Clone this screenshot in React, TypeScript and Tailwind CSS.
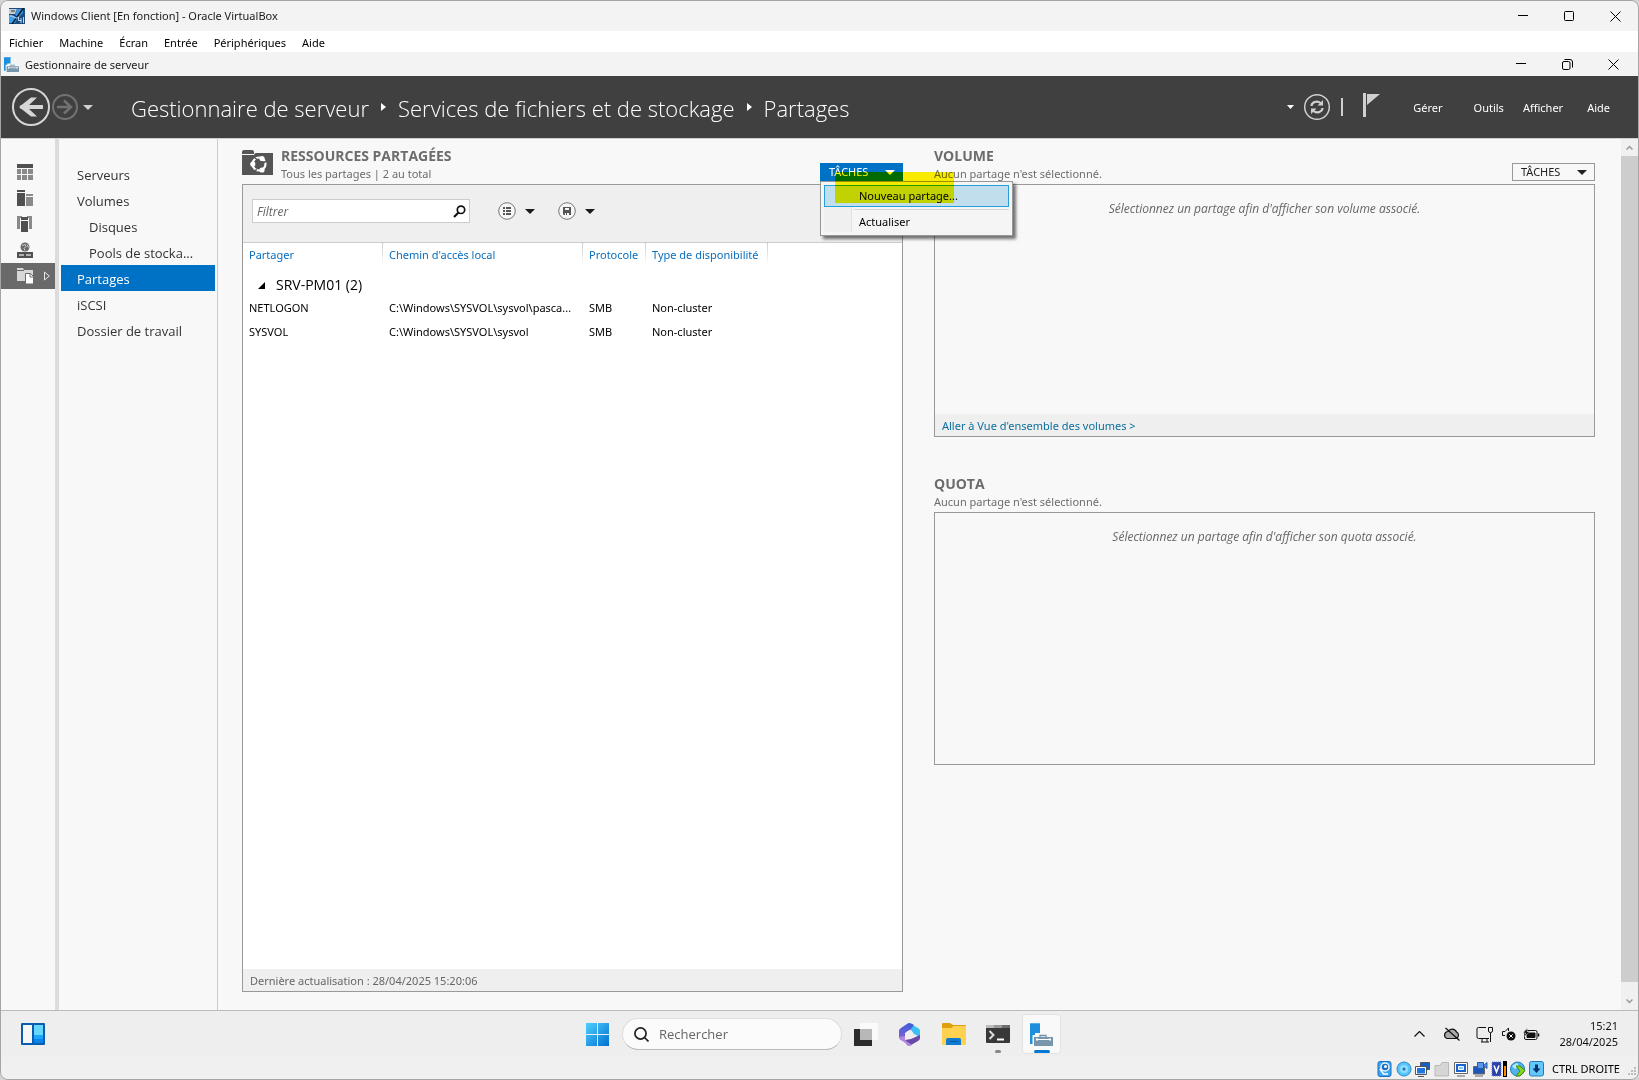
import { useState } from 'react'

const menus = ['Fichier', 'Machine', 'Écran', 'Entrée', 'Périphériques', 'Aide']

const navItems = [
  { label: 'Serveurs' },
  { label: 'Volumes' },
  { label: 'Disques', nested: true },
  { label: 'Pools de stocka...', nested: true },
  { label: 'Partages' },
  { label: 'iSCSI' },
  { label: 'Dossier de travail' }
]

const shares = [
  { name: 'NETLOGON', path: 'C:\\Windows\\SYSVOL\\sysvol\\pasca...', protocol: 'SMB', availability: 'Non-cluster' },
  { name: 'SYSVOL', path: 'C:\\Windows\\SYSVOL\\sysvol', protocol: 'SMB', availability: 'Non-cluster' }
]

function WindowButtons({ restored }: { restored?: boolean }) {
  return (
    <div className="ml-auto flex h-full">
      <button aria-label="Réduire" className="flex w-[46px] items-center justify-center">
        <svg width="10" height="10" stroke="#000" fill="none"><path d="M0 4.5h10" /></svg>
      </button>
      <button aria-label="Agrandir" className="flex w-[46px] items-center justify-center">
        {restored ? (
          <svg width="11" height="11" stroke="#000" fill="none">
            <rect x="0.5" y="2.5" width="7.5" height="8" rx="1.5" />
            <path d="M2.5 0.5h5.500a2.500 2.500 0 0 1 2.500 2.500v5.500" />
          </svg>
        ) : (
          <svg width="10" height="10" stroke="#000" fill="none"><rect x="0.5" y="0.5" width="9" height="9" rx="1" /></svg>
        )}
      </button>
      <button aria-label="Fermer" className="flex w-[46px] items-center justify-center">
        <svg width="11" height="11" stroke="#000" fill="none"><path d="M0.5 0.5l10 10M10.5 0.5l-10 10" /></svg>
      </button>
    </div>
  )
}

function Caret({ className }: { className?: string }) {
  return (
    <svg width="10" height="5" viewBox="0 0 10 5" fill="currentColor" className={className}><path d="M0 0h10L5 5z" /></svg>
  )
}

function ServerIcon({ className }: { className: string }) {
  return (
    <svg viewBox="0 0 23 23" className={className}>
      <path d="M0 0h10v10H5v11H0z" fill="#1e8fdc" />
      <path d="M0 0h10v1H0z" fill="#55b0ea" />
      <path d="M2.500 12h20.500v11H2.500z" fill="#f8f8f8" />
      <path d="M10 14v-1.500h6V14" fill="none" stroke="#6f93ad" strokeWidth="1.300" />
      <path d="M4 14h19v9H4z" fill="#7796ab" />
      <path d="M6 16.500h15" stroke="#fff" />
      <path d="M7 15.300v2.400M20 15.300v2.400" stroke="#fff" strokeWidth="1.400" />
    </svg>
  )
}

function TasksButton({ active, onClick }: { active?: boolean; onClick?: () => void }) {
  return (
    <button
      onClick={onClick}
      className={`flex h-[18px] w-[83px] items-center justify-between border pr-[7px] pl-2 text-[11px] leading-4 ${active ? 'border-[#0072c6] bg-[#0072c6] text-white' : 'border-[#999] bg-[#f8f8f8] text-[#222]'}`}
    >
      TÂCHES
      <Caret />
    </button>
  )
}

function SectionTitle({ title, subtitle }: { title: string; subtitle: string }) {
  return (
    <div className="whitespace-nowrap text-[#6c6c6c]">
      <h2 className="font-['Open_Sans',sans-serif] text-[14px] leading-[18px] font-bold">{title}</h2>
      <p className="text-[11px] leading-[18px]">{subtitle}</p>
    </div>
  )
}

function ToolIcons() {
  return (
    <div className="w-[54px] shrink-0 pt-5">
      <button aria-label="Tableau de bord" className="flex h-[26px] w-full items-center pl-4">
        <svg width="16" height="16">
          <path d="M0 0h16v4H0z" fill="#505050" />
          <path d="M0 5h4v5H0zM0 11h4v5H0zM5 5h5v5H5zM5 11h5v5H5zM11 5h5v5h-5zM11 11h5v5h-5z" fill="#8a8a8a" />
        </svg>
      </button>
      <button aria-label="Serveur local" className="flex h-[26px] w-full items-center pl-4">
        <svg width="16" height="16">
          <path d="M0 0h8v2H0zM0 3h8v13H0z" fill="#505050" />
          <path d="M9 4h7v2H9zM9 7h7v9H9z" fill="#8a8a8a" />
        </svg>
      </button>
      <button aria-label="Tous les serveurs" className="flex h-[26px] w-full items-center pl-4">
        <svg width="16" height="16">
          <path d="M0 0h5v2H3v11H0zM10 0h5v13h-3V2h-2z" fill="#8a8a8a" />
          <path d="M4 1h7v3H4zM4 5h7v11H4z" fill="#505050" />
        </svg>
      </button>
      <button aria-label="AD DS" className="flex h-[26px] w-full items-center pl-4">
        <svg width="16" height="16">
          <circle cx="8" cy="5" r="4.500" fill="#6a6a6a" />
          <path d="M5 3.500l3-1 1 2-2 2 1 2M10 2.500l1.500 3" stroke="#cfcfcf" fill="none" />
          <path d="M0 10h16v6H0z" fill="#505050" />
          <path d="M2 13h5M9 13h5" stroke="#d0d0d0" strokeWidth="1.500" />
        </svg>
      </button>
      <button aria-label="Services de fichiers" className="flex h-[26px] w-full items-center justify-between bg-[#6a6a6a] pr-[5px] pl-4">
        <svg width="17" height="16">
          <path d="M0 0h6l1 2h9v11H0z" fill="#d8d8d8" />
          <path d="M0 2.500h7" stroke="#6a6a6a" />
          <path d="M8.500 5.500h5l3 3v7.500h-8z" fill="#fff" stroke="#6a6a6a" />
          <path d="M13 5.500v3.500h3.500" fill="none" stroke="#6a6a6a" />
        </svg>
        <svg width="6" height="10" fill="none" stroke="#e4e4e4"><path d="M0.500 1v8L5.300 5z" /></svg>
      </button>
    </div>
  )
}

function TitleBars() {
  return (
    <>
      <div className="flex h-[30px] items-center bg-[#f3f3f3] pl-2">
        <svg width="16" height="16" className="mr-[6px]">
          <rect width="16" height="16" fill="#1c4a7c" />
          <path d="M0 1h8l-2 5H0z" fill="#c3ccd2" />
          <path d="M2 3h4" stroke="#333" />
          <path d="M8 1h6v4L9 10 6 6z" fill="#3f93d8" />
          <path d="M0 7l5 1 3 3-2 4H0z" fill="#3aa0f0" />
          <path d="M14.500 0L3 16" stroke="#0a1a2c" strokeWidth="1.500" />
          <path d="M1 8c4-1 5 4 9 1" stroke="#e7f4fd" fill="none" />
          <path d="M9.500 9v3.500h3M12 10v5M14.500 9v6" stroke="#b5dcf8" fill="none" />
        </svg>
        <h1 className="text-[11px]">Windows Client [En fonction] - Oracle VirtualBox</h1>
        <WindowButtons />
      </div>
      <nav className="flex h-[21px] items-center gap-4 bg-white pt-[3px] pl-2 text-[11px] text-black">
        {menus.map((menu) => (
          <button key={menu}>{menu}</button>
        ))}
      </nav>
      <div className="flex h-6 items-center bg-[#f3f3f3] pr-[2px] pl-[3px]">
        <ServerIcon className="mr-[6px] h-[15px] w-[15px]" />
        <span className="pt-[2px] text-[11px]">Gestionnaire de serveur</span>
        <WindowButtons restored />
      </div>
    </>
  )
}

function Header() {
  return (
    <header className="flex h-[63px] items-center border-b border-[#cfcfcf] bg-[#404040] text-white">
      <div className="flex w-[130px] shrink-0 items-center pl-[10px]">
        <button aria-label="Précédent">
          <svg width="40" height="40" fill="none" stroke="#d6d6d6">
            <circle cx="20" cy="20" r="18" strokeWidth="2" />
            <path d="M9.500 20H32" strokeWidth="4" />
            <path d="M20 10.500h6L16 20l10 9.500h-6L8 20z" fill="#d6d6d6" stroke="none" />
          </svg>
        </button>
        <button aria-label="Suivant">
          <svg width="28" height="28" fill="none" stroke="#727272">
            <circle cx="14" cy="14" r="12" strokeWidth="2" />
            <path d="M6 14h14" strokeWidth="2.500" />
            <path d="M13 7.500l7 6.500-7 6.500" strokeWidth="2.500" />
          </svg>
        </button>
        <button aria-label="Historique" className="ml-1 text-[#d0d0d0]"><Caret /></button>
      </div>
      <div className="flex items-center pt-[2px] font-['Open_Sans',sans-serif] text-[22px] font-light whitespace-nowrap">
        Gestionnaire de serveur
        <svg width="29" height="12" fill="#fff"><path d="M12 1l5 4-5 4z" /></svg>
        Services de fichiers et de stockage
        <svg width="29" height="12" fill="#fff"><path d="M12 1l5 4-5 4z" /></svg>
        Partages
      </div>
      <div className="ml-auto flex items-center pr-7 text-[11px]">
        <svg width="7" height="4" fill="#fff" className="mr-[9px]"><path d="M0 0h7L3.500 4z" /></svg>
        <button aria-label="Actualiser">
          <svg width="28" height="28" fill="none" stroke="#cfcfcf">
            <circle cx="14" cy="14" r="12.300" strokeWidth="1.500" />
            <path d="M8.500 13c0-3.500 5.500-6 9-3M19.500 15c0 3.500-5.500 6-9 3" strokeWidth="2.200" />
            <path d="M20 7v5.500h-5.500zM8 21v-5.500h5.500z" fill="#cfcfcf" stroke="none" />
          </svg>
        </button>
        <div className="mr-5 ml-[10px] h-[18px] w-[2px] bg-[#cfcfcf]" />
        <button aria-label="Notifications" className="mr-8">
          <svg width="18" height="28" fill="#d0d0d0"><path d="M0 0h3v24H0zM4 1h13L4 12z" /></svg>
        </button>
        <button className="mr-[31px] pt-[2px]">Gérer</button>
        <button className="mr-[19px] pt-[2px]">Outils</button>
        <button className="mr-6 pt-[2px]">Afficher</button>
        <button className="pt-[2px]">Aide</button>
      </div>
    </header>
  )
}

function SharesPanel() {
  const [open, setOpen] = useState(true)

  return (
    <section className="flex flex-col">
      <div className="flex h-[45px] justify-between pt-2">
        <div className="flex">
          <svg width="31" height="28" className="mr-2">
            <path d="M0 5q0-2 2-2h8q2 0 2 2v1h19v22H0z" fill="#555" />
            <path d="M0 7.500h12l1-1.500" stroke="#f8f8f8" fill="none" />
            <circle cx="17" cy="17" r="6.500" fill="none" stroke="#fff" strokeWidth="2.200" />
            <path d="M12.500 10.500l3 2.500M24.500 14l-3.500 2M13 25l1.500-3" stroke="#555" strokeWidth="1.500" />
            <circle cx="20" cy="11.500" r="2.600" fill="#fff" />
            <circle cx="10.800" cy="17" r="2.600" fill="#fff" />
            <circle cx="20" cy="23" r="2.600" fill="#fff" />
          </svg>
          <SectionTitle title="RESSOURCES PARTAGÉES" subtitle="Tous les partages | 2 au total" />
        </div>
        <div className="relative mt-4 h-[18px]">
          <TasksButton active onClick={() => setOpen(!open)} />
          {open && (
            <div className="absolute top-[18px] left-0 z-10 flex w-[193px] flex-col border border-[#979797] bg-[#f5f5f5] p-[3px] text-[11px] text-black shadow-[3px_3px_3px_rgba(0,0,0,0.55)]">
              <button className="h-[22px] border border-[#26a0da] bg-[#c1deed] pl-[34px] text-left">Nouveau partage...</button>
              <div className="flex">
                <div className="w-7 border-r border-[#e0e0e0] bg-[#f0f0f0]" />
                <div className="flex-1">
                  <div className="my-[2px] ml-[2px] h-px bg-[#d5d5d5]" />
                  <button className="h-5 w-full pl-[7px] text-left leading-5">Actualiser</button>
                </div>
              </div>
            </div>
          )}
          {/* highlighter stroke */}
          <div className="pointer-events-none absolute top-[9px] left-[15px] z-20 h-[31px] w-[119px] bg-[#fff200] mix-blend-multiply" />
        </div>
      </div>
      <div className="flex flex-1 flex-col border border-[#999] bg-white">
        <div className="flex h-[58px] items-start border-b border-[#ccc] bg-[#efefef] pt-[14px] pl-[9px]">
          <label className="flex h-6 w-[218px] items-center border border-[#ccc] bg-white pr-[3px] pl-1">
            <input
              aria-label="Filtrer"
              placeholder="Filtrer"
              className="min-w-0 flex-1 pt-px font-['Open_Sans',sans-serif] text-[12px] italic outline-none placeholder:text-[#666]"
            />
            <svg width="13" height="13" fill="none" stroke="#111">
              <circle cx="8" cy="4.800" r="3.700" strokeWidth="1.700" />
              <path d="M5.500 7.500L1 12" strokeWidth="2.200" />
            </svg>
          </label>
          <button aria-label="Regrouper" className="ml-7 flex h-6 items-center">
            <svg width="18" height="18">
              <circle cx="9" cy="9" r="8.300" fill="#f6f6f6" stroke="#777" />
              <path d="M5 5h2v2H5zM8 5h5v2H8zM5 8h2v2H5zM8 8h5v2H8zM5 11h2v2H5zM8 11h5v2H8z" fill="#555" />
            </svg>
            <Caret className="ml-[9px]" />
          </button>
          <button aria-label="Enregistrer la requête" className="ml-[23px] flex h-6 items-center">
            <svg width="18" height="18">
              <circle cx="9" cy="9" r="8.300" fill="#f6f6f6" stroke="#777" />
              <path d="M5 5h8v8H6l-1-1z" fill="#555" />
              <path d="M7 6h4v2H7zM7 11h1v2H7zM9 11h2v2H9z" fill="#f6f6f6" />
            </svg>
            <Caret className="ml-[9px]" />
          </button>
        </div>
        <table className="w-full table-fixed text-left text-[11px] text-black">
          <thead>
            <tr className="h-6 text-[#0a6ebd]">
              {[
                { label: 'Partager', width: 'w-[140px]' },
                { label: "Chemin d'accès local", width: 'w-[200px]' },
                { label: 'Protocole', width: 'w-[63px]' },
                { label: 'Type de disponibilité', width: 'w-[122px]' }
              ].map((col) => (
                <th
                  key={col.label}
                  className={`${col.width} bg-linear-to-b from-[#ccc] to-white bg-[length:1px_22px] bg-right-top bg-no-repeat pl-[6px] font-normal whitespace-nowrap`}
                >
                  {col.label}
                </th>
              ))}
              <th />
            </tr>
          </thead>
          <tbody>
            <tr>
              <td colSpan={5} className="h-[29px] pt-[7px] pl-[15px]">
                <button className="flex items-center gap-[11px] font-['Open_Sans',sans-serif] text-[14px] leading-[22px]">
                  <svg width="7" height="7"><path d="M7 0v7H0z" /></svg>
                  SRV-PM01 (2)
                </button>
              </td>
            </tr>
            {shares.map((share) => (
              <tr key={share.name} className="h-6 whitespace-nowrap">
                <td className="pl-[6px]">{share.name}</td>
                <td className="pl-[6px]">{share.path}</td>
                <td className="pl-[6px]">{share.protocol}</td>
                <td className="pl-[6px]">{share.availability}</td>
                <td />
              </tr>
            ))}
          </tbody>
        </table>
        <div className="mt-auto bg-[#efefef] pt-px pl-[7px] text-[11px] leading-[21px] text-[#666]">
          Dernière actualisation : 28/04/2025 15:20:06
        </div>
      </div>
    </section>
  )
}

function Taskbar() {
  return (
    <footer className="grid h-[47px] grid-cols-[1fr_auto_1fr] items-center border-t border-[#bbb] bg-[#eee]">
      <button aria-label="Widgets" className="ml-5 w-6">
        <svg width="24" height="22">
          <rect width="24" height="22" rx="1" fill="#0a5cb0" />
          <path d="M2 2h9v18H2z" fill="#f6f6f6" />
          <path d="M13 2h9v10h-9z" fill="#66d6ff" />
          <path d="M13 12h9v4h-9z" fill="#1ba5fb" />
          <path d="M13 16h9v4h-9z" fill="#0a84ea" />
        </svg>
      </button>
      <div className="flex items-center pl-2">
        <button aria-label="Démarrer">
          <svg width="23" height="23">
            <defs>
              <linearGradient id="start" x1="0" y1="0" x2="1" y2="1">
                <stop offset="0" stopColor="#4fd0ff" />
                <stop offset="1" stopColor="#0070d0" />
              </linearGradient>
            </defs>
            <path d="M0 0h11v11H0zM12 0h11v11H12zM0 12h11v11H0zM12 12h11v11H12z" fill="url(#start)" />
          </svg>
        </button>
        <label className="ml-[13px] flex h-8 w-[220px] items-center rounded-full border border-[#ddd] border-b-[#bbb] bg-[#fbfbfb] pl-[11px]">
          <svg width="15" height="15" fill="none" stroke="#222" strokeWidth="1.700">
            <circle cx="6.500" cy="6.500" r="5.600" />
            <path d="M10.500 10.500l4 4" />
          </svg>
          <input
            aria-label="Rechercher"
            placeholder="Rechercher"
            className="ml-[10px] min-w-0 flex-1 pt-px font-['Open_Sans',sans-serif] text-[13px] outline-none placeholder:text-[#666]"
          />
        </label>
        <button aria-label="Affichage des tâches" className="ml-3">
          <svg width="24" height="23">
            <path d="M0 6h18v17H0z" fill="#2b2b2b" />
            <path d="M6 0h18v17H6z" fill="#fafafa" />
            <path d="M6 6h12v11H6z" fill="#b8b8b8" />
          </svg>
        </button>
        <button aria-label="Microsoft 365" className="ml-[21px]">
          <svg width="21" height="23">
            <defs>
              <linearGradient id="loop" x1="0" y1="0" x2="0" y2="1">
                <stop offset="0" stopColor="#3a5fd8" />
                <stop offset="1" stopColor="#8a60d8" />
              </linearGradient>
            </defs>
            <path d="M10 0l9 5q2 1 2 3v6l-6-3-3-4-4-2V1z" fill="#3cc0f4" />
            <path d="M10 0q2 0 5 2l-3 4-6 4v8l-4-1q-2-1-2-3V8q0-2 2-3l6-4z" fill="url(#loop)" />
            <path d="M21 12v3q0 2-2 3l-7 4q-2 1-4 0l-2-5 6-1z" fill="#6a48a8" />
            <path d="M0 14q0 2 2 3l7 5q2 1 4 0l-7-5V13z" fill="#b184e0" />
            <circle cx="10.500" cy="11.500" r="3.700" fill="#eee" />
          </svg>
        </button>
        <button aria-label="Explorateur de fichiers" className="ml-[22px]">
          <svg width="24" height="22">
            <path d="M0 1q0-1 1-1h7l3 2h12q1 0 1 1v6H0z" fill="#dfa010" />
            <path d="M0 5h9l3-2h12v18q0 1-1 1H1q-1 0-1-1z" fill="#ffd150" />
            <path d="M4 22v-5q0-2 2-2h11q2 0 2 2v5z" fill="#0f7ad0" />
            <path d="M8 18.500h8" stroke="#065aa5" />
          </svg>
        </button>
        <button aria-label="Terminal" className="relative ml-5">
          <svg width="24" height="18">
            <rect width="24" height="18" rx="1" fill="#383838" />
            <path d="M0 0h8v3H0z" fill="#bbb" />
            <path d="M8 0h8v3H8z" fill="#999" />
            <path d="M16 0h8v3h-8z" fill="#6d6d6d" />
            <path d="M3.500 6l4 4-4 4" stroke="#ddd" strokeWidth="2" fill="none" />
            <path d="M11 14.500h7" stroke="#fff" strokeWidth="2" />
          </svg>
          <span className="absolute top-[25px] left-[9px] h-[3px] w-[6px] rounded-full bg-[#888]" />
        </button>
        <button aria-label="Gestionnaire de serveur" className="relative ml-3 flex h-10 w-[39px] items-center justify-center rounded-[4px] border border-[#e2e2e2] bg-[#f9f9f9]">
          <ServerIcon className="h-[23px] w-[23px]" />
          <span className="absolute bottom-0 h-[3px] w-4 rounded-full bg-[#0078d4]" />
        </button>
      </div>
      <div className="flex items-center justify-end pr-5 text-[#111]">
        <svg width="11" height="6" fill="none" stroke="currentColor" className="mr-[18px]"><path d="M0.500 5.500l5-5 5 5" strokeWidth="1.200" /></svg>
        <svg width="18" height="14" fill="none" stroke="currentColor" className="mr-[15px]">
          <path d="M4 11.500h9a3.500 3.500 0 0 0 .5-6.500A4.800 4.800 0 0 0 5 4.500a3.600 3.600 0 0 0-1 7z" fill="#aaa" strokeWidth="1.200" />
          <path d="M2.500 1l14 12.500" strokeWidth="1.300" />
        </svg>
        <svg width="17" height="17" fill="none" stroke="currentColor" className="mr-2">
          <path d="M10 1.500H2.500q-1.500 0-1.500 1.500v8q0 1.500 1.500 1.500H13M5 16h8M6 13v3M11 13v3M14.500 7v9" />
          <path d="M12.500 1.500h4V5q0 1.500-2 1.500t-2-1.500z" />
        </svg>
        <svg width="15" height="14" fill="none" stroke="currentColor" className="mr-[7px]">
          <path d="M7.500 4V1L4 4.500H1.500v4H4" />
          <circle cx="10" cy="9" r="4.500" fill="#111" stroke="none" />
          <path d="M8.300 7.300l3.400 3.400M11.700 7.300l-3.400 3.400" stroke="#fff" />
        </svg>
        <svg width="17" height="13" fill="none" stroke="currentColor" className="mr-[19px]">
          <rect x="1.500" y="2.500" width="12.500" height="9" rx="1.500" />
          <path d="M4 5h8v4.500H4z" fill="#111" />
          <path d="M15.500 5.500v3" strokeWidth="1.500" />
          <path d="M4.500 0L0 5h2.500L1.500 8.500 7 3.500H4z" fill="#111" stroke="#eee" strokeWidth="0.500" />
        </svg>
        <div className="text-right text-[11px] leading-4">
          <div>15:21</div>
          <div>28/04/2025</div>
        </div>
      </div>
    </footer>
  )
}

function StatusBar() {
  return (
    <div className="flex h-[22px] items-center justify-end gap-[3px] bg-[#f0f0f0] pt-[2px] pr-px text-black">
      <svg width="16" height="16">
        <rect x="1" y="0.500" width="13" height="15" rx="2" fill="#3aa7f0" stroke="#1c6cc0" />
        <circle cx="8" cy="6" r="4" fill="#1c6cc0" stroke="#e6f6ff" strokeWidth="1.500" />
        <circle cx="8.500" cy="5.500" r="1.500" fill="#fff" />
        <path d="M3 8l3.500 5H11" stroke="#fff" strokeWidth="1.500" fill="none" />
      </svg>
      <svg width="16" height="16">
        <circle cx="8" cy="8" r="7" fill="#58c6fa" stroke="#2a8ac8" />
        <circle cx="8" cy="8" r="4" fill="#8fdcff" />
        <circle cx="8" cy="8" r="1.500" fill="#1e70b0" />
      </svg>
      <svg width="16" height="16">
        <path d="M5.500 1.500h9v7h-9zM10 9v3" fill="#1560c8" stroke="#555" />
        <path d="M1.500 6.500h9v6.500h-9z" fill="#1c78e0" stroke="#fff" />
        <path d="M0.500 5.500h11v8H0.500zM3 15.500h6" fill="none" stroke="#555" />
      </svg>
      <svg width="16" height="16"><path d="M1 4.500h5l2-3h6.500V15H1z" fill="#d6d6d6" stroke="#b8b8b8" /></svg>
      <svg width="16" height="16">
        <path d="M1.500 1.500h13v11h-13zM4 15h8" fill="#fff" stroke="#666" />
        <path d="M3 3h10v8H3z" fill="#1c64c8" />
        <path d="M5.500 5.500h5v3h-5z" fill="#7fc0ff" stroke="#fff" />
      </svg>
      <svg width="16" height="16">
        <path d="M1.500 5.500h11v7.500h-11zM3 15h8" fill="#1c58b8" stroke="#666" />
        <path d="M5.500 1.500h6v6h-6zM11.500 4.500l3.500-3v6z" fill="#5b94ec" stroke="#2858b0" />
      </svg>
      <svg width="16" height="16">
        <rect x="1" y="1" width="9" height="14" fill="#2c40a8" stroke="#6b7ed8" strokeDasharray="1 1" />
        <path d="M3 4.500l2.500 6.500L8 4.500" stroke="#fff" strokeWidth="1.600" fill="none" />
        <path d="M12 0h4v16h-4z" fill="#000" />
        <path d="M13 5h2v10h-2z" fill="#ff8a00" />
      </svg>
      <svg width="16" height="16">
        <circle cx="7.500" cy="8" r="7" fill="#4fb6ec" stroke="#2878b8" />
        <path d="M2 5l5-3 2 3-4 3z" fill="#b9ecff" />
        <path d="M6 5h4l5 4.500-5 5.500H6l4-5z" fill="#8bd420" stroke="#3d8a10" />
      </svg>
      <svg width="16" height="16">
        <rect x="0.500" y="0.500" width="14" height="14.500" rx="2" fill="#62c8fa" stroke="#2478b8" />
        <path d="M7.500 3.500v5" stroke="#06306c" strokeWidth="3" />
        <path d="M3.500 7.500h8l-4 4.500z" fill="#06306c" />
      </svg>
      <span className="mx-1 text-[11px]">CTRL DROITE</span>
      <svg width="10" height="14" fill="#bbb">
        <path d="M7 5h2v2H7zM7 8h2v2H7zM7 11h2v2H7zM4 8h2v2H4zM4 11h2v2H4zM1 11h2v2H1z" />
      </svg>
    </div>
  )
}

export default function App() {
  const [current, setCurrent] = useState('Partages')

  return (
    <div className="flex min-h-screen bg-[#d4d4d4] font-['Noto_Sans','Open_Sans',sans-serif] text-[#1a1a1a]">
      <div className="flex flex-1 flex-col overflow-hidden rounded-lg border border-[#a5a5a5]">
        <TitleBars />
        <Header />
        <div className="flex flex-1 bg-[#f8f8f8]">
          <ToolIcons />
          <div className="w-1 shrink-0 bg-[#dcdcdc]" />
          <nav className="w-[159px] shrink-0 border-r border-[#ccc] px-[2px] pt-[22px] font-['Open_Sans',sans-serif]">
            {navItems.map((item) => (
              <button
                key={item.label}
                onClick={() => setCurrent(item.label)}
                className={`block h-[26px] w-full pt-[3px] text-left text-[13px] whitespace-nowrap ${item.nested ? 'pl-7' : 'pl-4'} ${item.label === current ? 'bg-[#0072c6] text-white' : 'text-[#333]'}`}
              >
                {item.label}
              </button>
            ))}
          </nav>
          <main className="grid flex-1 grid-cols-2 gap-[31px] pr-[26px] pb-[18px] pl-6">
            <SharesPanel />
            <div className="flex flex-col gap-[30px]">
              <section>
                <div className="flex h-[45px] justify-between pt-2">
                  <SectionTitle title="VOLUME" subtitle="Aucun partage n'est sélectionné." />
                  <div className="mt-4"><TasksButton /></div>
                </div>
                <div className="flex h-[253px] flex-col justify-between border border-[#999] text-[11px]">
                  <p className="pt-[15px] text-center font-['Open_Sans',sans-serif] text-[12px] text-[#666] italic">Sélectionnez un partage afin d'afficher son volume associé.</p>
                  <div className="bg-[#efefef] pt-px pl-[7px] leading-[21px]">
                    <a href="#volumes" className="text-[#0a6f9c]">Aller à Vue d'ensemble des volumes &gt;</a>
                  </div>
                </div>
              </section>
              <section>
                <div className="h-[45px] pt-2">
                  <SectionTitle title="QUOTA" subtitle="Aucun partage n'est sélectionné." />
                </div>
                <div className="h-[253px] border border-[#999]">
                  <p className="pt-[15px] text-center font-['Open_Sans',sans-serif] text-[12px] text-[#666] italic">Sélectionnez un partage afin d'afficher son quota associé.</p>
                </div>
              </section>
            </div>
          </main>
          {/* Scrollbar */}
          <div className="flex w-[17px] shrink-0 flex-col items-center bg-[#f0f0f0]">
            <svg width="7" height="17" fill="none" stroke="#999" strokeWidth="1.500"><path d="M0.500 10.500l3-3 3 3" /></svg>
            <div className="w-full flex-1 bg-[#cdcdcd]" />
            <svg width="7" height="28" fill="none" stroke="#999" strokeWidth="1.500"><path d="M0.500 17.500l3 3 3-3" /></svg>
          </div>
        </div>
        <Taskbar />
        <StatusBar />
      </div>
    </div>
  )
}
